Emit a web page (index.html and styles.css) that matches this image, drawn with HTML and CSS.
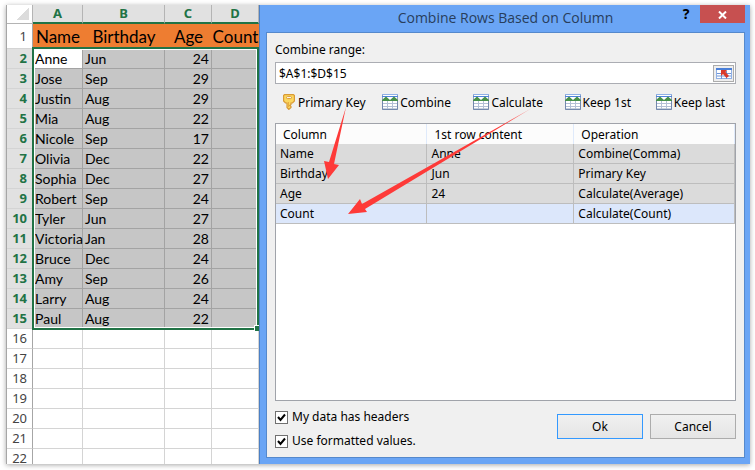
FILE: index.html
```html
<!DOCTYPE html>
<html lang="en">
<head>
    <meta charset="UTF-8">
    <meta name="viewport" content="width=device-width, initial-scale=1.0">
    <title>Combine Rows Based on Column</title>
    <link rel="stylesheet" href="styles.css">
</head>
<body>

    <!-- Shared icons -->
    <svg class="defs" aria-hidden="true">
        <symbol id="tableIcon" viewBox="0 0 16 16">
            <rect x="0.5" y="0.5" width="15" height="14.500" fill="#fff" stroke="#8fa0bd"/>
            <rect x="0" y="0" width="16" height="1" fill="#8fb0e6"/>
            <rect x="0" y="2" width="16" height="1" fill="#4f83dc"/>
            <path d="M0 6L4 2.500L8 6L12 2.500L16 6V7H0Z" fill="#46904a"/>
            <path d="M1 9.500H15M1 12.500H15M5.500 7V15M10.500 7V15" stroke="#b3c0d6"/>
            <path d="M0.500 7V15.500H15.500V7" fill="none" stroke="#7388ad"/>
        </symbol>
    </svg>

    <div class="screen">

        <!-- Worksheet -->
        <div class="sheet">
            <table class="grid">
                <colgroup>
                    <col class="col-num"><col class="col-a"><col class="col-b"><col class="col-c"><col class="col-d">
                </colgroup>
                <thead>
                    <tr class="letters"><th class="corner"></th><th>A</th><th>B</th><th>C</th><th>D</th></tr>
                    <tr class="titles"><th class="num">1</th><td>Name</td><td>Birthday</td><td>Age</td><td>Count</td></tr>
                </thead>
                <tbody class="selected">
                    <tr><th>2</th><td class="active">Anne</td><td>Jun</td><td>24</td><td></td></tr>
                    <tr><th>3</th><td>Jose</td><td>Sep</td><td>29</td><td></td></tr>
                    <tr><th>4</th><td>Justin</td><td>Aug</td><td>29</td><td></td></tr>
                    <tr><th>5</th><td>Mia</td><td>Aug</td><td>22</td><td></td></tr>
                    <tr><th>6</th><td>Nicole</td><td>Sep</td><td>17</td><td></td></tr>
                    <tr><th>7</th><td>Olivia</td><td>Dec</td><td>22</td><td></td></tr>
                    <tr><th>8</th><td>Sophia</td><td>Dec</td><td>27</td><td></td></tr>
                    <tr><th>9</th><td>Robert</td><td>Sep</td><td>24</td><td></td></tr>
                    <tr><th>10</th><td>Tyler</td><td>Jun</td><td>27</td><td></td></tr>
                    <tr><th>11</th><td>Victoria</td><td>Jan</td><td>28</td><td></td></tr>
                    <tr><th>12</th><td>Bruce</td><td>Dec</td><td>24</td><td></td></tr>
                    <tr><th>13</th><td>Amy</td><td>Sep</td><td>26</td><td></td></tr>
                    <tr><th>14</th><td>Larry</td><td>Aug</td><td>24</td><td></td></tr>
                    <tr><th>15</th><td>Paul</td><td>Aug</td><td>22</td><td></td></tr>
                </tbody>
                <tbody class="empty">
                    <tr><th>16</th><td></td><td></td><td></td><td></td></tr>
                    <tr><th>17</th><td></td><td></td><td></td><td></td></tr>
                    <tr><th>18</th><td></td><td></td><td></td><td></td></tr>
                    <tr><th>19</th><td></td><td></td><td></td><td></td></tr>
                    <tr><th>20</th><td></td><td></td><td></td><td></td></tr>
                    <tr><th>21</th><td></td><td></td><td></td><td></td></tr>
                    <tr><th>22</th><td></td><td></td><td></td><td></td></tr>
                </tbody>
            </table>
        </div>

        <!-- Dialog -->
        <div class="dialog">
            <div class="titlebar">
                <h1>Combine Rows Based on Column</h1>
                <button class="help" aria-label="Help">?</button>
                <button class="close" aria-label="Close">
                    <svg width="9" height="8" viewBox="0 0 9 8"><path d="M1 0.500L8 7.500M8 0.500L1 7.500" stroke="#fff" stroke-width="2"/></svg>
                </button>
            </div>

            <div class="content">
                <label for="range">Combine range:</label>
                <div class="range">
                    <input type="text" id="range" value="$A$1:$D$15">
                    <button class="pick" aria-label="Select range">
                        <svg width="16" height="11" viewBox="0 0 16 11">
                            <rect x="0.500" y="0.500" width="15" height="10" fill="#fff" stroke="#8fb0e6"/>
                            <rect x="0" y="0" width="16" height="2" fill="#4a7fd8"/>
                            <path d="M1 5.500H15M1 8H15M5.500 3V11M10.500 3V11" stroke="#6f95d6"/>
                            <path d="M5 2L11 2L9.500 4L13 8L10.500 10L7 6L5 8Z" fill="#d93a2b"/>
                        </svg>
                    </button>
                </div>

                <div class="toolbar">
                    <button class="key">
                        <svg width="12" height="16" viewBox="0 0 12 16">
                            <path d="M1.500 0.700H10.500L11.400 1.600V7L9.500 9H8V10.500L6.800 11.500L8 12.500V13.500L5.800 15.400L4 13.500V9H2.500L0.600 7V1.600Z" fill="#fbd75f" stroke="#d99a36" stroke-width="1.200"/>
                            <rect x="3.500" y="2.600" width="5" height="2" rx="1" fill="#fff" stroke="#d99a36"/>
                            <path d="M5.500 8V13" stroke="#e8ad40"/>
                        </svg>
                        Primary Key
                    </button>
                    <button><svg width="16" height="16"><use href="#tableIcon"/></svg>Combine</button>
                    <button><svg width="16" height="16"><use href="#tableIcon"/></svg>Calculate</button>
                    <button><svg width="16" height="16"><use href="#tableIcon"/></svg>Keep 1st</button>
                    <button><svg width="16" height="16"><use href="#tableIcon"/></svg>Keep last</button>
                </div>

                <div class="list">
                    <table>
                        <thead>
                            <tr><th>Column</th><th>1st row content</th><th>Operation</th></tr>
                        </thead>
                        <tbody>
                            <tr><td>Name</td><td>Anne</td><td>Combine(Comma)</td></tr>
                            <tr><td>Birthday</td><td>Jun</td><td>Primary Key</td></tr>
                            <tr><td>Age</td><td>24</td><td>Calculate(Average)</td></tr>
                            <tr class="current"><td>Count</td><td></td><td>Calculate(Count)</td></tr>
                        </tbody>
                    </table>
                </div>

                <div class="footer">
                    <div class="options">
                        <label><input type="checkbox" checked>My data has headers</label>
                        <label><input type="checkbox" checked>Use formatted values.</label>
                    </div>
                    <div class="actions">
                        <button class="ok">Ok</button>
                        <button>Cancel</button>
                    </div>
                </div>

                <!-- Callout arrows -->
                <svg class="arrows" width="277" height="190" viewBox="267 33 277 190" aria-hidden="true">
                    <linearGradient id="fade" gradientUnits="userSpaceOnUse" x1="540" y1="103" x2="505" y2="124">
                        <stop offset="0" stop-color="#fe3a38" stop-opacity="0.3"/>
                        <stop offset="1" stop-color="#fe3a38"/>
                    </linearGradient>
                    <path d="M346 107L334 164L339 165L328 179L324 161L329 162Z" fill="#fe3a38"/>
                    <path d="M532 108L365 209L367 212L348 214L360 199L362 204Z" fill="url(#fade)"/>
                </svg>
            </div>
        </div>

    </div>

</body>
</html>
```

FILE: styles.css
```css
* {
    box-sizing: border-box;
    margin: 0;
    padding: 0;
}
body {
    height: 100vh;
    padding: 5px 5px 6px 6px;
    background: #fff;
    color: #000;
    font-family: "Noto Sans", "Open Sans", sans-serif;
    font-size: 12px;
}
button, input {
    font: inherit;
    color: inherit;
}
button {
    cursor: pointer;
}
.defs {
    display: none;
}
.screen {
    display: grid;
    grid-template-columns: 253fr 491fr;
    grid-template-rows: 100%;
    height: 100%;
    box-shadow: 0 1px 5px rgba(0, 0, 0, 0.35);
}

/* Worksheet */
.sheet {
    min-width: 0;
    overflow: hidden;
    background: #fff;
}
.grid {
    width: 100%;
    table-layout: fixed;
    border-spacing: 0;
    border-left: 1px solid #a6a6a6;
}
.col-num { width: 26px; }
.col-a { width: 50px; }
.col-b { width: 82px; }
.col-c { width: 47px; }
.grid td {
    height: 20px;
    padding: 0 2px;
    border-right: 1px solid #d4d4d4;
    border-bottom: 1px solid #d4d4d4;
    font-family: Lato, sans-serif;
    font-size: 14px;
    line-height: 19px;
    white-space: nowrap;
}
.grid th {
    height: 20px;
    padding-right: 5px;
    border-right: 1px solid #a6a6a6;
    border-bottom: 1px solid #d4d4d4;
    font-size: 13px;
    font-weight: 400;
    line-height: 19px;
    text-align: right;
    color: #444;
}
.grid .letters th {
    height: 19px;
    padding: 0;
    background: #e1e1e1;
    border-right: 1px solid #b4b4b4;
    border-bottom: 2px solid #217346;
    color: #217346;
    font-weight: 700;
    line-height: 17px;
    text-align: center;
}
.grid .letters .corner {
    background: linear-gradient(135deg, #fff 50%, #dcdcdc 50%) content-box;
    padding: 3px 3px 3px 10px;
    border-bottom: 1px solid #b4b4b4;
}
.grid .titles td {
    height: 25px;
    padding: 0;
    background: #ee7d31;
    border: 0;
    font-size: 17px;
    line-height: 25px;
    text-align: center;
}
.selected {
    position: relative;
}
.selected th {
    background: #e1e1e1;
    color: #217346;
    font-weight: 700;
}
.selected td {
    background: #c6c6c6;
    border-color: #a3a3a3;
}
.selected .active {
    background: #fff;
}
.selected td:nth-child(4) {
    text-align: right;
}
.selected::before {
    content: "";
    position: absolute;
    inset: -2px 0 -1px 25px;
    border: 2px solid #217346;
    box-shadow: inset 0 0 0 1px #fff;
}
.selected::after {
    content: "";
    position: absolute;
    right: 0;
    bottom: -2px;
    width: 4px;
    height: 5px;
    background: #217346;
    border: 1px solid #fff;
    border-width: 1px 0 0 1px;
}

/* Dialog */
.dialog {
    display: flex;
    flex-direction: column;
    min-width: 0;
    padding: 0 5px 6px 6px;
    background: #6aa5f5;
    border-left: 1px solid #4c80c4;
}
.titlebar {
    display: flex;
    align-items: flex-start;
    height: 27px;
}
.titlebar h1 {
    flex: 1;
    padding-left: 73px;
    color: #283e5c;
    font-family: "Open Sans", sans-serif;
    font-size: 14px;
    font-weight: 400;
    line-height: 25px;
    text-align: center;
    white-space: nowrap;
}
.titlebar button {
    border: 0;
    background: none;
}
.titlebar .help {
    width: 28px;
    font-size: 14px;
    font-weight: 700;
    line-height: 17px;
}
.titlebar .close {
    width: 45px;
    height: 18px;
    background: #c75050;
}
.content {
    position: relative;
    flex: 1;
    display: flex;
    flex-direction: column;
    padding: 8px;
    background: #f0f0f0;
    border: 1px solid #5589cc;
}
.content > label {
    line-height: 17px;
}
.range {
    display: flex;
    align-items: center;
    height: 22px;
    margin-top: 4px;
    padding: 0 1px 0 3px;
    background: #fff;
    border: 1px solid #abadb3;
}
.range input {
    flex: 1;
    min-width: 0;
    border: 0;
    outline: 0;
    background: none;
}
.pick {
    display: flex;
    align-items: center;
    justify-content: center;
    width: 21px;
    height: 17px;
    background: #eee;
    border: 1px solid #acacac;
}
.toolbar {
    display: grid;
    grid-template-columns: 99fr 91fr 91fr 91fr 80fr;
    padding: 10px 0 13px 8px;
}
.toolbar button {
    display: flex;
    align-items: center;
    gap: 2px;
    height: 16px;
    border: 0;
    background: none;
    white-space: nowrap;
}
.toolbar .key {
    gap: 3px;
}
.toolbar svg {
    flex: none;
}
.list {
    flex: 1;
    background: #fff;
    border: 1px solid #a0a3aa;
}
.list table {
    width: 100%;
    table-layout: fixed;
    border-spacing: 0;
}
.list th, .list td {
    height: 20px;
    text-align: left;
    line-height: 19px;
    white-space: nowrap;
}
.list th {
    padding-left: 7px;
    border-right: 1px solid #dfeafb;
    background: #fcfcfc;
    font-weight: 400;
}
.list th:first-child {
    width: 33%;
}
.list th:nth-child(2) {
    width: 32%;
}
.list td {
    padding-left: 4px;
    background: #dbdbdb;
    border-right: 1px solid #bdbdbd;
    border-bottom: 1px solid #bdbdbd;
}
.list .current td {
    background: #dce7fb;
}
.footer {
    display: flex;
    justify-content: space-between;
    align-items: flex-start;
    padding-top: 8px;
}
.options {
    display: flex;
    flex-direction: column;
    gap: 8px;
}
.options label {
    display: flex;
    align-items: center;
    gap: 4px;
    line-height: 16px;
}
.options input {
    appearance: none;
    width: 13px;
    height: 13px;
    border: 1px solid #707070;
    background: #fff;
}
.options input:checked {
    background: #fff url("data:image/svg+xml,%3Csvg xmlns='http://www.w3.org/2000/svg' viewBox='0 0 11 11'%3E%3Cpath d='M2 5L4.500 8L9 2.500' fill='none' stroke='%23000' stroke-width='2'/%3E%3C/svg%3E");
}
.actions {
    display: flex;
    gap: 7px;
    padding-top: 5px;
}
.actions button {
    width: 86px;
    height: 25px;
    background: linear-gradient(#f0f0f0, #e5e5e5);
    border: 1px solid #acacac;
}
.actions .ok {
    border-color: #3399ff;
}
.arrows {
    position: absolute;
    top: 0;
    left: 0;
    pointer-events: none;
}
```
